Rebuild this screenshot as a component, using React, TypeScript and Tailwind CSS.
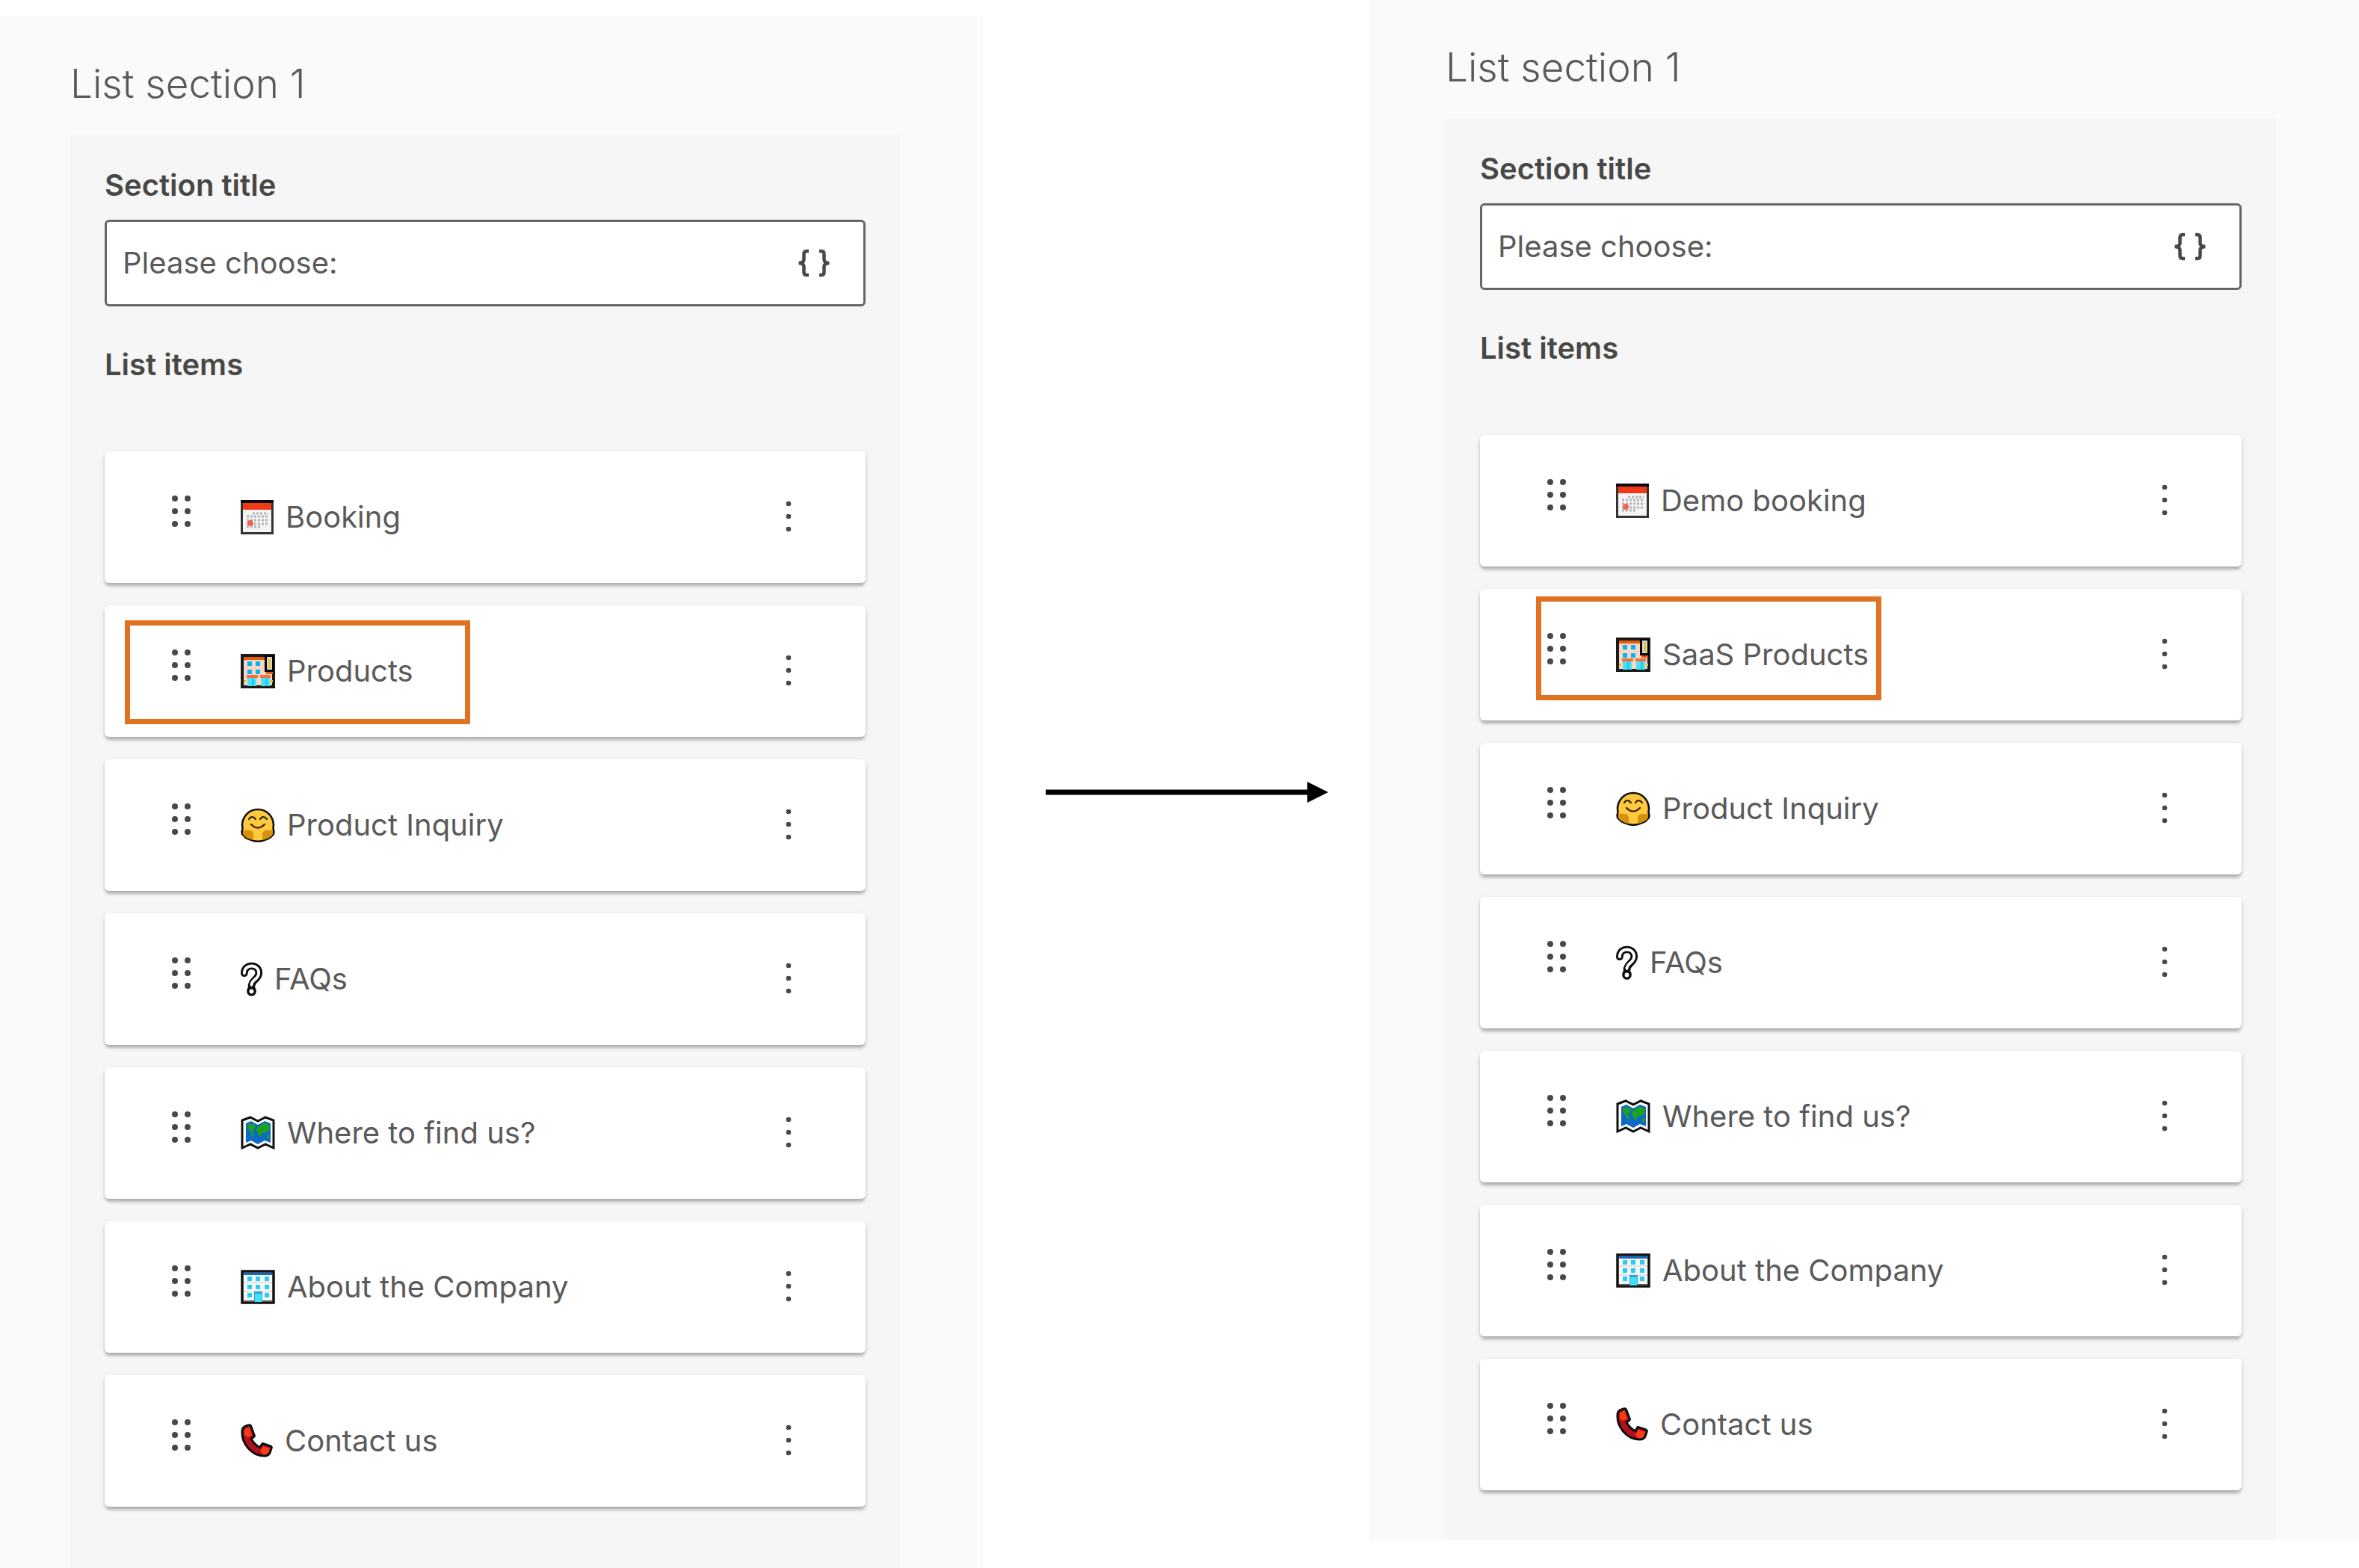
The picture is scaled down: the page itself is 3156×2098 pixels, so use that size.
import type { ReactNode } from "react";

type Item = { id: string; icon: ReactNode; label: string };

const CalendarIcon = () => (
  <svg viewBox="0 0 44 46" className="h-[46px] w-[44px]" aria-hidden="true">
    <rect x="1.5" y="1.5" width="41" height="43" fill="#f5f5f5" stroke="#333" strokeWidth="3" />
    <path d="M0 2h44" stroke="#0a0a0a" strokeWidth="4" />
    <path d="M3 4h38v9H3z" fill="#f03a17" />
    <path d="M16 18h21M8 22h29M8 27h29M8 32h29M8 36h20" stroke="#b4b4b4" strokeWidth="3" strokeDasharray="3 2" />
    <circle cx="13" cy="31" r="4" fill="#f0644b" />
  </svg>
);

const StoreIcon = () => (
  <svg viewBox="0 0 46 46" className="size-[46px]" aria-hidden="true">
    <rect x="2" y="2" width="42" height="42" fill="#fbd5c5" stroke="#1a1a1a" strokeWidth="4" />
    <path d="M4 4h29v4H4zM34 24h9v3h-9z" fill="#e8590c" />
    <path d="M32 2h12v22H32z" fill="#000" />
    <path d="M35 4h7v17h-7z" fill="#d5d5d5" />
    <path d="M37 6h3v13h-3z" fill="#e8c52d" />
    <path d="M9 10h6v6H9zM20 10h6v6h-6zM9 21h6v6H9zM20 21h6v6h-6z" fill="#00b7f5" />
    <path d="M8 28h15v4H8zM26 28h14v4H26z" fill="#ef7238" />
    <path d="M9 32h12v11H9zM27 32h12v11H27z" fill="#4fe1fb" />
    <path d="M15 32h3v11h-3zM33 32h3v11h-3z" fill="#1ccdf4" />
    <path d="M4 35h3v3H4zM40 35h3v3h-3z" fill="#f0c000" />
  </svg>
);

const HugIcon = () => (
  <svg viewBox="0 0 46 46" className="size-[46px]" aria-hidden="true">
    <path
      d="M23 2C11 2 3 11 2 22c0 4 1 5 0 8-1 2 0 3 0 5l5 5c4 2 7 3 10 4 4 1 8 1 12 0 3-1 6-2 10-4l5-5c0-2 1-3 0-5-1-3 0-4 0-8C43 11 35 2 23 2z"
      fill="#ffc83d"
      stroke="#111"
      strokeWidth="2.6"
      strokeLinejoin="round"
    />
    <path d="M3 29c4 2 8 0 12 2l2 3v9c-6-1-12-4-14-8zM43 29c-4 2-8 0-12 2l-2 3v9c6-1 12-4 14-8z" fill="#d6900a" />
    <path d="M11 15q4-6 9 0M26 15q4-6 9 0M14 22q9 9 18 0" fill="none" stroke="#2b2100" strokeWidth="2.2" strokeLinecap="round" />
  </svg>
);

const QuestionIcon = () => (
  <svg viewBox="0 0 30 46" className="h-[46px] w-[29px]" aria-hidden="true">
    <g fill="none" strokeLinecap="round" strokeLinejoin="round">
      <path d="M5 15C5 1 26 2 25 15c0 8-10 9-10 18" stroke="#0d0d0d" strokeWidth="10" />
      <path d="M15 39v1" stroke="#0d0d0d" strokeWidth="13" />
      <path d="M5 15C5 1 26 2 25 15c0 8-10 9-10 16" stroke="#fff" strokeWidth="4" />
      <path d="M15 40v.1" stroke="#fff" strokeWidth="6" />
    </g>
  </svg>
);

const MapIcon = () => (
  <svg viewBox="0 0 46 46" className="size-[46px]" aria-hidden="true">
    <path d="M2 6l11-4 10 5 10-5 11 4v37l-11-5-10 5-10-5-11 5z" fill="#fff" stroke="#111" strokeWidth="3" />
    <path d="M7 10l7-3 9 5 9-5 8 3v26l-8-3-9 5-9-5-7 3z" fill="#0b69c7" />
    <path d="M9 12l6-2 5 3-1 4-3 3 2 4-2 7-2-8-4-5zM22 16l5-4 5-3 7 4-1 7-4 1-2 3-3-2-2 6-3-1-1-5-3-2z" fill="#20a020" />
    <path d="M35 26l3-1v5l-3 1z" fill="#20a020" />
  </svg>
);

const OfficeIcon = () => (
  <svg viewBox="0 0 46 46" className="size-[46px]" aria-hidden="true">
    <rect x="2" y="2" width="42" height="42" fill="#f7f7f7" stroke="#111" strokeWidth="3.5" />
    <path d="M4 4h38v3H4z" fill="#1268c4" />
    <path d="M4 17h38M4 29h38" stroke="#dcdcdc" strokeWidth="1.5" />
    <path
      d="M9 9h6v6H9zM20 9h6v6h-6zM32 9h6v6h-6zM9 20h6v6H9zM20 20h6v6h-6zM32 20h6v6h-6zM9 31h6v6H9zM32 31h6v6h-6z"
      fill="#27cdf5"
    />
    <path d="M18 29h11v14H18z" fill="#2f9fe0" />
    <path d="M19 32h9v11h-9z" fill="#43e0fb" />
    <path d="M4 42h14M29 42h13" stroke="#555" strokeWidth="2" />
  </svg>
);

const PhoneIcon = () => (
  <svg viewBox="0 0 43 46" className="h-[46px] w-[43px]" aria-hidden="true">
    <path
      d="M5 4l5-2q3-1 4 2l4 11q1 2-1 3l-3 2q4 8 12 12l2-4q1-2 3-1l9 3q2 1 1 3l-2 6q-2 4-7 4C14 43 1 26 2 10q0-4 3-6z"
      fill="#b5101c"
      stroke="#0d0d0d"
      strokeWidth="3"
      strokeLinejoin="round"
    />
    <path d="M5 8l6-4 4 11-5 3-5-3zM26 36l4-6 9 3-2 6q-2 3-8 2z" fill="#fb3c12" />
  </svg>
);

const commonItems: Item[] = [
  { id: "inquiry", icon: <HugIcon />, label: "Product Inquiry" },
  { id: "faqs", icon: <QuestionIcon />, label: "FAQs" },
  { id: "location", icon: <MapIcon />, label: "Where to find us?" },
  { id: "about", icon: <OfficeIcon />, label: "About the Company" },
  { id: "contact", icon: <PhoneIcon />, label: "Contact us" },
];

const beforeItems: Item[] = [
  { id: "booking", icon: <CalendarIcon />, label: "Booking" },
  { id: "products", icon: <StoreIcon />, label: "Products" },
  ...commonItems,
];

const afterItems: Item[] = [
  { id: "booking", icon: <CalendarIcon />, label: "Demo booking" },
  { id: "products", icon: <StoreIcon />, label: "SaaS Products" },
  ...commonItems,
];

function ListCard({ item, children }: { item: Item; children?: ReactNode }) {
  return (
    <li className="relative flex h-[176px] items-center rounded-md bg-white pr-[93px] pl-[88px] shadow-[0_6px_4px_-2px_rgba(0,0,0,0.16),0_3px_4px_rgba(0,0,0,0.14),0_2px_8px_rgba(0,0,0,0.08)]">
      <button type="button" aria-label={`Move ${item.label}`} className="-mt-4">
        <svg viewBox="0 0 28 44" className="h-[44px] w-[30px]" fill="#484846">
          <circle cx="5" cy="5" r="4" />
          <circle cx="22" cy="5" r="4" />
          <circle cx="5" cy="22" r="4" />
          <circle cx="22" cy="22" r="4" />
          <circle cx="5" cy="39" r="4" />
          <circle cx="22" cy="39" r="4" />
        </svg>
      </button>
      <div className="ml-16 flex flex-1 items-center gap-4">
        {item.icon}
        <span>{item.label}</span>
      </div>
      <button type="button" aria-label={`Options for ${item.label}`}>
        <svg viewBox="0 0 20 44" className="h-[44px] w-[20px]" fill="#484846">
          <circle cx="10" cy="4" r="3.3" />
          <circle cx="10" cy="21" r="3.3" />
          <circle cx="10" cy="38" r="3.3" />
        </svg>
      </button>
      {children}
    </li>
  );
}

function SectionEditor({ id, items, highlight }: { id: string; items: Item[]; highlight: ReactNode }) {
  return (
    <>
      <h2 className="text-[53px] leading-[64px] font-light">List section 1</h2>
      <div className="mt-9 grow bg-[#f6f6f6] px-[46px] pt-11 pb-[66px]">
        <label htmlFor={id} className="block text-[40px] leading-[48px] font-semibold text-[#484846]">
          Section title
        </label>
        <div className="mt-[22px] flex h-[116px] items-center rounded-md border-3 border-[#666664] bg-white pr-[43px] pl-[21px]">
          <input id={id} type="text" defaultValue="Please choose:" className="min-w-0 flex-1 outline-none" />
          <button type="button" aria-label="Insert variable">
            <svg viewBox="0 0 44 40" className="h-[40px] w-[44px]" fill="none" stroke="#484846" strokeWidth="4.5">
              <path d="M14 4h-3q-3.500 0-3.500 4v7q0 5-7 5q7 0 7 5v7q0 4 3.500 4h3" />
              <path d="M28 4h3q3.500 0 3.500 4v7q0 5 7 5q-7 0-7 5v7q0 4-3.500 4h-3" />
            </svg>
          </button>
        </div>
        <h3 className="mt-[54px] text-[40px] leading-[48px] font-semibold text-[#484846]">List items</h3>
        <ul className="mt-[92px] flex flex-col gap-[30px]">
          {items.map((item) => (
            <ListCard key={item.id} item={item}>
              {item.id === "products" && highlight}
            </ListCard>
          ))}
        </ul>
      </div>
    </>
  );
}

export default function App() {
  return (
    <main className="grid min-h-screen grid-cols-[1315fr_518fr_1323fr] items-start bg-white font-['Inter',sans-serif] text-[40px] leading-[48px] text-[#5a5a5a]">
      {/* Before */}
      <section className="mt-[22px] flex flex-col self-stretch bg-[#fafafa] pt-[58px] pr-[111px] pl-[94px]">
        <SectionEditor
          id="title-before"
          items={beforeItems}
          highlight={
            <div className="pointer-events-none absolute top-5 left-[27px] h-[139px] w-[462px] border-7 border-[#e07222]" />
          }
        />
      </section>

      <div className="self-center pt-[22px] pr-[56px] pl-[84px]">
        <svg viewBox="0 0 378 28" className="w-full" aria-hidden="true">
          <path d="M0 10.500h350V0l28 14-28 14V17.500H0z" />
        </svg>
      </div>

      {/* After */}
      <section className="flex flex-col bg-[#fafafa] pt-[58px] pr-[111px] pl-[101px]">
        <SectionEditor
          id="title-after"
          items={afterItems}
          highlight={
            <div className="pointer-events-none absolute top-[10px] left-[75px] h-[139px] w-[462px] border-7 border-[#e07222]" />
          }
        />
      </section>
    </main>
  );
}
